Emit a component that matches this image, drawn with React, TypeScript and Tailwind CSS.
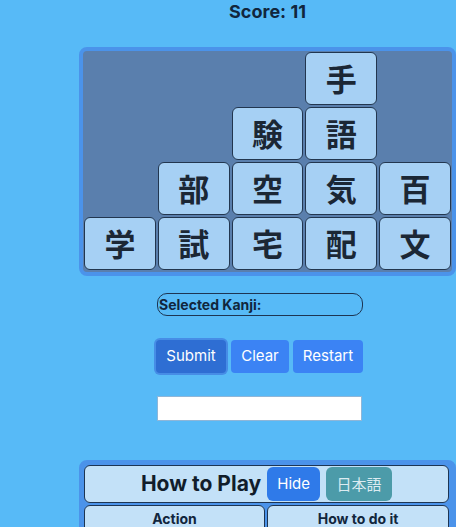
import React from "react";

const tiles: { k: string; col: number; row: number }[] = [
  { k: "手", col: 4, row: 1 },
  { k: "験", col: 3, row: 2 },
  { k: "語", col: 4, row: 2 },
  { k: "部", col: 2, row: 3 },
  { k: "空", col: 3, row: 3 },
  { k: "気", col: 4, row: 3 },
  { k: "百", col: 5, row: 3 },
  { k: "学", col: 1, row: 4 },
  { k: "試", col: 2, row: 4 },
  { k: "宅", col: 3, row: 4 },
  { k: "配", col: 4, row: 4 },
  { k: "文", col: 5, row: 4 },
];

const colClass: Record<number, string> = {
  1: "col-start-1",
  2: "col-start-2",
  3: "col-start-3",
  4: "col-start-4",
  5: "col-start-5",
};
const rowClass: Record<number, string> = {
  1: "row-start-1",
  2: "row-start-2",
  3: "row-start-3",
  4: "row-start-4",
};

export default function App() {
  return (
    <div className="min-h-[527px] w-[456px] overflow-hidden bg-[#57baf7] font-['Inter','Noto_Sans_CJK_JP',sans-serif] text-[#11263d]">
      <div className="ml-[79px] flex w-[377px] flex-col">
        <h1 className="text-center text-lg font-bold leading-7 -mt-[2px]">Score: 11</h1>

        <div className="mt-[21px] grid h-[229px] grid-cols-5 grid-rows-4 gap-[2px] rounded-lg border-4 border-[#4b93ea] bg-[#5a7fad] p-px pb-[2px]">
          {tiles.map((t) => (
            <button
              key={t.k}
              className={`${colClass[t.col]} ${rowClass[t.row]} flex items-center justify-center rounded-md border border-[#22364f] bg-[#a6d0f4] font-['Noto_Sans_CJK_JP',sans-serif] text-[31px] font-bold text-[#1b2735]`}
            >
              {t.k}
            </button>
          ))}
        </div>

        <div className="ml-[78px] mt-[17px] flex w-[206px] flex-col">
          <div className="h-[23px] rounded-[10px] border border-[#1d3553] px-px text-sm font-bold leading-[21px]">
            Selected Kanji:
          </div>

          <div className="mt-[24px] flex gap-[4px]">
            <button className="h-[33px] w-[70px] -ml-px rounded-[4px] bg-[#2e6ed3] text-[15px] text-white ring-2 ring-[#468de6]">
              Submit
            </button>
            <button className="ml-px h-[33px] w-[58px] rounded-[4px] bg-[#3b83f4] text-[15px] text-white">
              Clear
            </button>
            <button className="h-[33px] w-[70px] rounded-[4px] bg-[#3b83f4] text-[15px] text-white">
              Restart
            </button>
          </div>

          <input className="mt-[23px] h-[25px] w-[205px] border border-[#8fb6d8] bg-white" />
        </div>

        <div className="mt-[39px] rounded-lg border-4 border-[#4b93ea] bg-[#4b93ea] p-px pr-[3px]">
          <div className="flex h-[38px] items-center justify-center gap-[6px] rounded-md border border-[#1d3553] bg-[#c3e1f8]">
            <span className="text-[21px] font-bold text-[#111d2b]">How to Play</span>
            <button className="h-[34px] w-[53px] rounded-md bg-[#2f7ae9] text-[15px] text-white">Hide</button>
            <button className="h-[34px] w-[66px] rounded-md bg-[#4c9ba9] font-['Noto_Sans_CJK_JP',sans-serif] text-[15px] text-[#dcebf1]">
              日本語
            </button>
          </div>
          <div className="mt-[2px] flex gap-[2px]">
            <div className="h-[30px] w-[181px] rounded-t-md border border-[#1d3553] bg-[#c3e1f8] pt-[3px] text-center text-sm font-bold">
              Action
            </div>
            <div className="h-[30px] flex-1 rounded-t-md border border-[#1d3553] bg-[#c3e1f8] pt-[3px] text-center text-sm font-bold">
              How to do it
            </div>
          </div>
        </div>
      </div>
    </div>
  );
}
